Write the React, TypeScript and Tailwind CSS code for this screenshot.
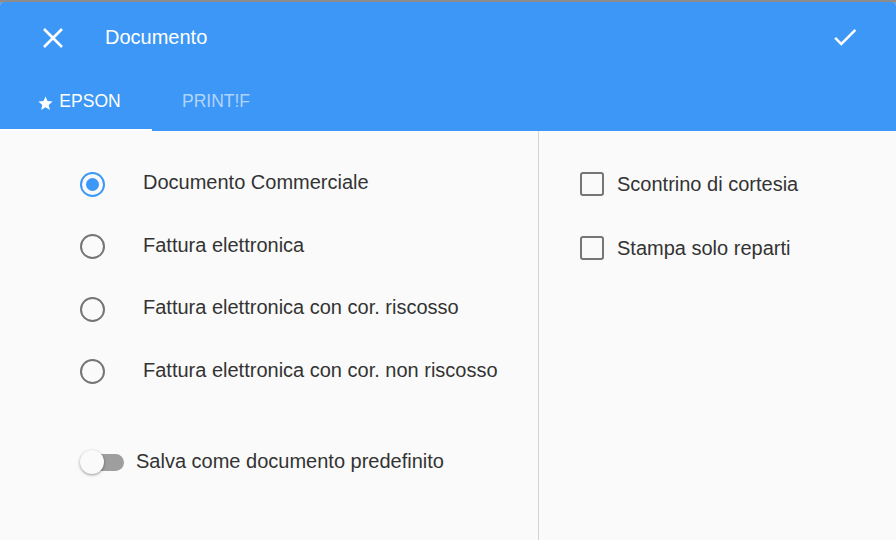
import React from 'react';

const font = { fontFamily: '"Liberation Sans", Arial, sans-serif' };

function Radio({ checked }: { checked?: boolean }) {
    return (
        <span
            className={`flex items-center justify-center w-[25px] h-[25px] rounded-full border-[2.5px] ${
                checked ? 'border-[#3d97f6]' : 'border-[#757575]'
            }`}
        >
            {checked && <span className="w-[12.5px] h-[12.5px] rounded-full bg-[#3d97f6]" />}
        </span>
    );
}

function Checkbox() {
    return <span className="block w-[24px] h-[24px] rounded-[3px] border-[2.5px] border-[#757575]" />;
}

const options = [
    { label: 'Documento Commerciale', checked: true },
    { label: 'Fattura elettronica' },
    { label: 'Fattura elettronica con cor. riscosso' },
    { label: 'Fattura elettronica con cor. non riscosso' },
];

export default function App() {
    return (
        <div className="w-[896px] h-[540px] bg-[#8c8c8c] pt-[2px] overflow-hidden" style={font}>
            <div className="h-full flex flex-col rounded-t-[4px] overflow-hidden bg-[#fafafa]">
                <div className="bg-[#3d97f6] text-white">
                    <div className="h-[70px] flex items-center pl-[43px] pr-[36px]">
                        <svg width="20" height="20" viewBox="0 0 20 20" className="mt-[1px]">
                            <path d="M1 1L19 19M19 1L1 19" stroke="white" strokeWidth="2.6" />
                        </svg>
                        <span className="ml-[42px] text-[20px] leading-none">Documento</span>
                        <svg width="30" height="30" viewBox="0 0 24 24" className="ml-auto mb-[1px]">
                            <path fill="white" d="M9 16.17L4.83 12l-1.42 1.41L9 19 21 7l-1.41-1.41z" />
                        </svg>
                    </div>
                    <div className="h-[59px] flex text-[17.5px]">
                        <div className="w-[152px] flex items-center justify-center border-b-2 border-white pt-[2px] pl-[6px]">
                            <svg width="17" height="17" viewBox="0 0 24 24" className="mr-[5px] mt-[3px]">
                                <path fill="white" d="M12 17.27L18.18 21l-1.64-7.03L22 9.24l-7.19-.61L12 2 9.19 8.63 2 9.24l5.46 4.73L5.82 21z" />
                            </svg>
                            <span>EPSON</span>
                        </div>
                        <div className="flex items-center pl-[30px] text-white/60">PRINT!F</div>
                    </div>
                </div>
                <div className="flex-1 flex text-[20px] text-[#333]">
                    <div className="w-[539px] border-r border-[#d4d4d4] pt-[22px]">
                        {options.map((o) => (
                            <div key={o.label} className="h-[62.5px] flex items-center pl-[80px]">
                                <Radio checked={o.checked} />
                                <span className="ml-[38px] mb-[4px]">{o.label}</span>
                            </div>
                        ))}
                        <div className="mt-[39px] h-[40px] flex items-center pl-[80px]">
                            <span className="relative w-[44px] h-[22px] flex items-center">
                                <span className="absolute left-[6px] right-0 h-[17px] rounded-full bg-[#9e9e9e]" />
                                <span className="relative w-[24px] h-[24px] rounded-full bg-[#fafafa] shadow-[0_1px_3px_rgba(0,0,0,0.4)]" />
                            </span>
                            <span className="ml-[12px] mb-[2px]">Salva come documento predefinito</span>
                        </div>
                    </div>
                    <div className="flex-1 pt-[21px] pl-[41px]">
                        {['Scontrino di cortesia', 'Stampa solo reparti'].map((l) => (
                            <div key={l} className="h-[64px] flex items-center">
                                <Checkbox />
                                <span className="ml-[13px]">{l}</span>
                            </div>
                        ))}
                    </div>
                </div>
            </div>
        </div>
    );
}
